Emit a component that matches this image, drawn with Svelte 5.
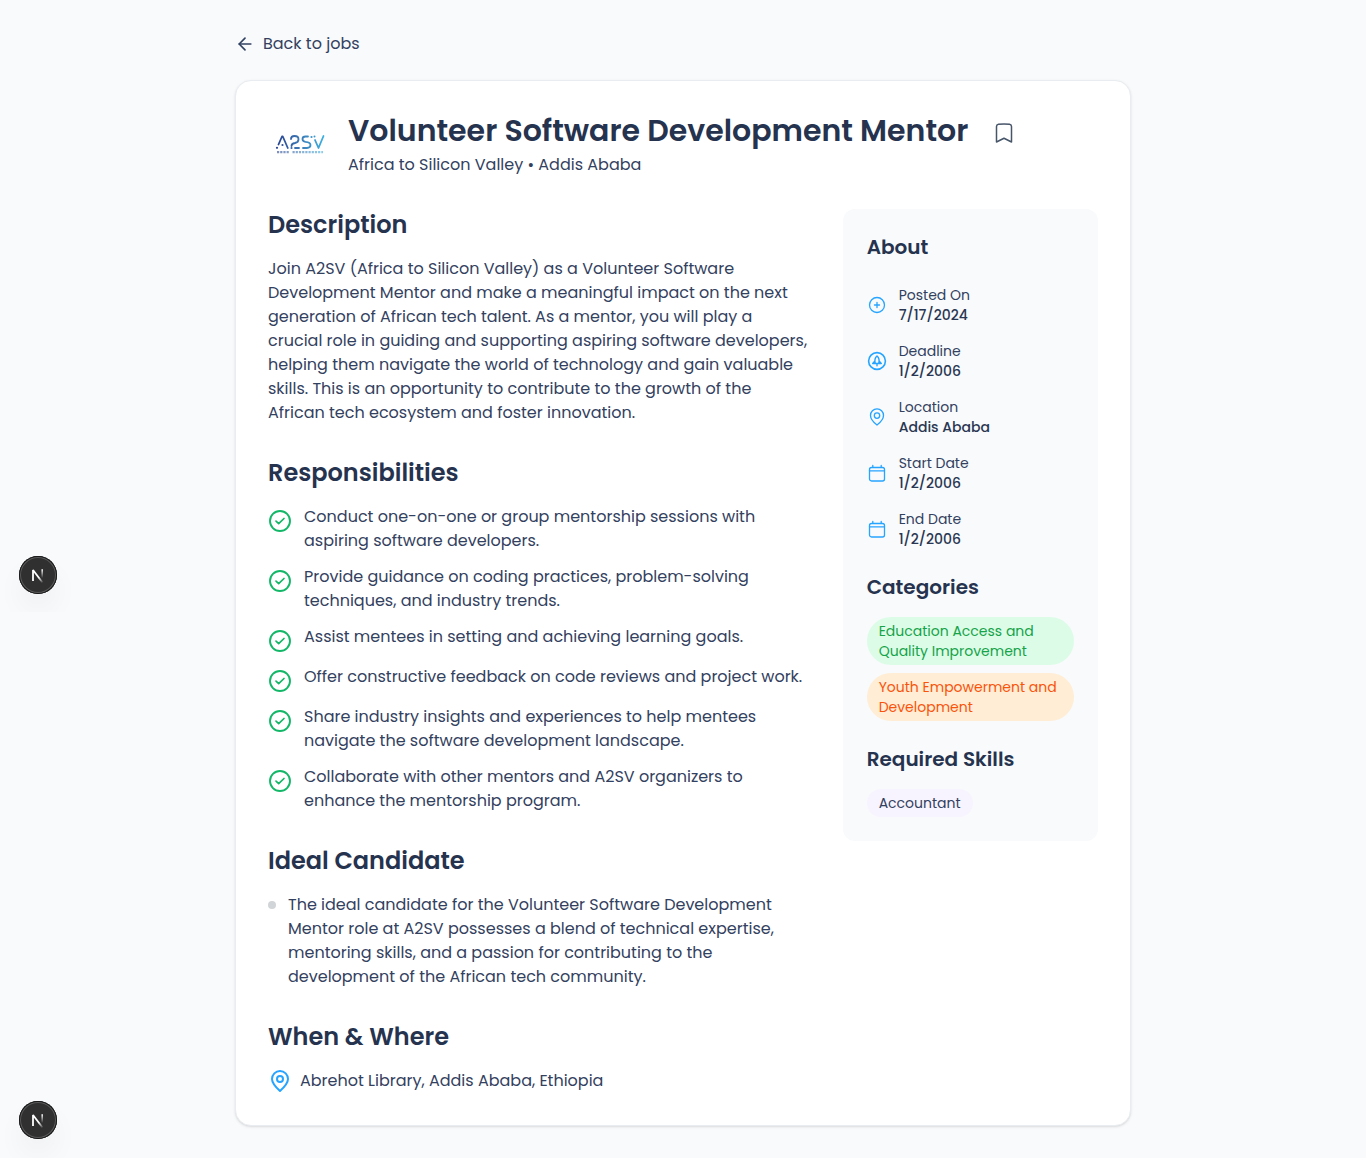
<script>
  const description =
    'Join A2SV (Africa to Silicon Valley) as a Volunteer Software Development Mentor and make a meaningful impact on the next generation of African tech talent. As a mentor, you will play a crucial role in guiding and supporting aspiring software developers, helping them navigate the world of technology and gain valuable skills. This is an opportunity to contribute to the growth of the African tech ecosystem and foster innovation.';

  const responsibilities = [
    'Conduct one-on-one or group mentorship sessions with aspiring software developers.',
    'Provide guidance on coding practices, problem-solving techniques, and industry trends.',
    'Assist mentees in setting and achieving learning goals.',
    'Offer constructive feedback on code reviews and project work.',
    'Share industry insights and experiences to help mentees navigate the software development landscape.',
    'Collaborate with other mentors and A2SV organizers to enhance the mentorship program.'
  ];

  const candidate =
    'The ideal candidate for the Volunteer Software Development Mentor role at A2SV possesses a blend of technical expertise, mentoring skills, and a passion for contributing to the development of the African tech community.';

  const facts = [
    { icon: 'plus', label: 'Posted On', value: '7/17/2024' },
    { icon: 'rocket', label: 'Deadline', value: '1/2/2006' },
    { icon: 'pin', label: 'Location', value: 'Addis Ababa' },
    { icon: 'calendar', label: 'Start Date', value: '1/2/2006' },
    { icon: 'calendar', label: 'End Date', value: '1/2/2006' }
  ];

  const categories = [
    { text: 'Education Access and Quality Improvement', tone: 'green' },
    { text: 'Youth Empowerment and Development', tone: 'orange' }
  ];
</script>

{#snippet nextMark(id)}
  <svg width="38" height="38" viewBox="0 0 38 38" fill="none" aria-hidden="true">
    <defs>
      <linearGradient id="{id}-a" x1="15" y1="14" x2="24" y2="26" gradientUnits="userSpaceOnUse">
        <stop offset="0.6" stop-color="#fff" />
        <stop offset="1" stop-color="#fff" stop-opacity="0.1" />
      </linearGradient>
      <linearGradient id="{id}-b" x1="0" y1="13" x2="0" y2="22" gradientUnits="userSpaceOnUse">
        <stop stop-color="#fff" />
        <stop offset="1" stop-color="#fff" stop-opacity="0" />
      </linearGradient>
    </defs>
    <path d="M14 25V14l9.500 12.500" stroke="url(#{id}-a)" stroke-width="1.8" stroke-linejoin="bevel" />
    <path d="M23.200 13.200v9" stroke="url(#{id}-b)" stroke-width="1.6" />
  </svg>
{/snippet}

<main class="page">
  <a class="back" href="#jobs">
    <svg width="20" height="20" viewBox="0 0 24 24" class="stroke" stroke-width="2" aria-hidden="true">
      <path d="m12 19-7-7 7-7" /><path d="M19 12H5" />
    </svg>
    Back to jobs
  </a>

  <article class="card">
    <header class="head">
      <svg class="logo" width="64" height="64" viewBox="0 0 64 64" fill="none" role="img" aria-label="A2SV">
        <defs>
          <linearGradient id="logo-ink" x1="8" y1="0" x2="56" y2="0" gradientUnits="userSpaceOnUse">
            <stop stop-color="#27418f" /><stop offset="0.5" stop-color="#3d79b5" /><stop offset="1" stop-color="#3bb0e0" />
          </linearGradient>
        </defs>
        <g stroke="url(#logo-ink)" stroke-width="1.8" stroke-linecap="round" stroke-linejoin="round">
          <path d="M10.500 31.500 14 23.500h.8l5 11.500" />
          <path d="M23 26q0-3 3.500-3 4 0 4 3.200t-3.500 3.800q-3.500.5-3.500 3" />
          <path d="M27 35h4" />
          <path d="M40 23.500h-2.500q-3 0-3 2.500t3 2.800q5 .3 5 3.200t-3.500 3h-4" />
          <path d="m47 27 3.500 8 5-12" />
        </g>
        <g fill="url(#logo-ink)">
          <circle cx="9" cy="34.800" r="1.100" /><circle cx="14.500" cy="32" r="1.100" />
          <circle cx="23.500" cy="35" r="1.100" />
          <circle cx="43.500" cy="24" r="1.100" /><circle cx="46.500" cy="23.500" r="1" />
        </g>
        <path d="M9 39.200h12.500M24.500 39.200h30.500" stroke="url(#logo-ink)" stroke-width="2.200" stroke-dasharray="2.200 1" opacity="0.600" />
      </svg>
      <div>
        <div class="title-row">
          <h1>Volunteer Software Development Mentor</h1>
          <button class="save" type="button" aria-label="Bookmark this job">
            <svg width="24" height="24" viewBox="0 0 24 24" class="stroke" stroke-width="1.5" aria-hidden="true">
              <path d="M17.593 3.322c1.100.128 1.907 1.077 1.907 2.185V21L12 17.250 4.500 21V5.507c0-1.108.806-2.057 1.907-2.185a48.507 48.507 0 0 1 11.186 0Z" />
            </svg>
          </button>
        </div>
        <p>Africa to Silicon Valley • Addis Ababa</p>
      </div>
    </header>

    <div class="columns">
      <div class="main">
        <section>
          <h2>Description</h2>
          <p>{description}</p>
        </section>

        <section>
          <h2>Responsibilities</h2>
          <ul class="checks">
            {#each responsibilities as item}
              <li>
                <svg width="24" height="24" viewBox="0 0 24 24" class="stroke green-ink" stroke-width="1.9" aria-hidden="true">
                  <circle cx="12" cy="12" r="10" /><path d="m8 12.200 2.700 2.500 5.300-5.200" stroke-width="1.700" />
                </svg>
                <span>{item}</span>
              </li>
            {/each}
          </ul>
        </section>

        <section>
          <h2>Ideal Candidate</h2>
          <ul class="dots">
            <li><span class="dot"></span><span>{candidate}</span></li>
          </ul>
        </section>

        <section>
          <h2>When &amp; Where</h2>
          <p class="place">
            <svg width="24" height="24" viewBox="0 0 24 24" class="stroke blue-ink" stroke-width="2" aria-hidden="true">
              <path d="M12 22C9 19.300 4 14.500 4 10a8 8 0 0 1 16 0c0 4.500-5 9.300-8 12Z" /><circle cx="12" cy="10" r="3" />
            </svg>
            Abrehot Library, Addis Ababa, Ethiopia
          </p>
        </section>
      </div>

      <aside>
        <section>
          <h3 class="about">About</h3>
          <dl>
            {#each facts as fact}
              <div class="fact">
                <svg width="20" height="20" viewBox="0 0 20 20" class="stroke blue-ink" stroke-width="1.3" aria-hidden="true">
                  {#if fact.icon === 'plus'}
                    <circle cx="10" cy="10" r="7.500" /><path d="M10 7.500v5M7.500 10h5" />
                  {:else if fact.icon === 'rocket'}
                    <circle cx="10" cy="10" r="8.400" stroke-width="1.600" />
                    <path d="M8.300 12.500C7.300 9 8.500 6.300 10 5c1.500 1.300 2.700 4 1.700 7.500ZM7.700 10.300 5.700 12.500h8.600l-2-2.200M10 12.500v2.300" stroke-width="1.400" />
                  {:else if fact.icon === 'pin'}
                    <path d="M10 18c-2.500-2-6.500-5.800-6.500-9.600a6.500 6.500 0 0 1 13 0C16.500 12.200 12.500 16 10 18Z" /><circle cx="10" cy="8.600" r="2.700" />
                  {:else}
                    <rect x="2.500" y="4.500" width="15" height="13.500" rx="2" /><path d="M2.500 7.800h15M5.800 2.500v1.800M14.200 2.500v1.800" />
                  {/if}
                </svg>
                <div>
                  <dt>{fact.label}</dt>
                  <dd>{fact.value}</dd>
                </div>
              </div>
            {/each}
          </dl>
        </section>

        <section>
          <h3>Categories</h3>
          <ul class="tags">
            {#each categories as tag}
              <li class="tag {tag.tone}">{tag.text}</li>
            {/each}
          </ul>
        </section>

        <section>
          <h3>Required Skills</h3>
          <ul class="tags">
            <li class="tag purple">Accountant</li>
          </ul>
        </section>
      </aside>
    </div>
  </article>
</main>

<div class="clip">
  <button class="dev" type="button" aria-label="Open developer tools">{@render nextMark('upper')}</button>
</div>
<div class="clip low">
  <button class="dev" type="button" aria-label="Open developer tools panel">{@render nextMark('lower')}</button>
</div>

<style>
  :global(body) {
    margin: 0;
    background: #f8fafc;
  }
  h1, h2, h3, p, ul, dl, dd {
    margin: 0;
    padding: 0;
  }
  ul {
    list-style: none;
  }
  .page {
    box-sizing: border-box;
    max-width: 896px;
    margin: 0 auto;
    padding: 32px 0;
    font: 400 16px/24px Poppins, Inter, sans-serif;
    color: #334160;
  }
  svg {
    flex: none;
    display: block;
  }
  .stroke {
    fill: none;
    stroke: currentColor;
    stroke-linecap: round;
    stroke-linejoin: round;
  }
  .blue-ink {
    color: #26a4ff;
  }
  .green-ink {
    color: #13b767;
    margin-top: 4px;
  }
  .back {
    display: flex;
    width: fit-content;
    align-items: center;
    gap: 8px;
    margin-bottom: 24px;
    color: inherit;
    text-decoration: none;
  }
  .card {
    padding: 32px;
    border: 1px solid #e9ecf0;
    border-radius: 16px;
    background: #fff;
    box-shadow: 0 1px 3px rgb(0 0 0 / 10%), 0 1px 2px -1px rgb(0 0 0 / 10%);
  }
  .head {
    display: flex;
    gap: 16px;
    margin-bottom: 32px;
  }
  .title-row {
    display: flex;
    gap: 16px;
  }
  h1, h2, h3 {
    font-weight: 600;
    color: #26334f;
  }
  h1 {
    font-size: 30px;
    line-height: 36px;
  }
  h2 {
    margin-bottom: 16px;
    font-size: 24px;
    line-height: 32px;
  }
  h3 {
    margin-bottom: 16px;
    font-size: 20px;
    line-height: 28px;
  }
  .about {
    margin-bottom: 24px;
  }
  .save {
    align-self: start;
    padding: 8px;
    border: 0;
    background: none;
    color: #475569;
    cursor: pointer;
  }
  .columns {
    display: grid;
    grid-template-columns: repeat(3, minmax(0, 1fr));
    align-items: start;
    gap: 32px;
  }
  .main {
    grid-column: span 2;
    display: grid;
    gap: 32px;
  }
  .checks {
    display: grid;
    gap: 12px;
  }
  .checks li, .dots li {
    display: flex;
    gap: 12px;
  }
  .dot {
    flex: none;
    width: 8px;
    height: 8px;
    margin-top: 8px;
    border-radius: 50%;
    background: #d1d5d8;
  }
  .place {
    display: flex;
    gap: 8px;
  }
  aside {
    display: grid;
    gap: 24px;
    padding: 24px;
    border-radius: 12px;
    background: #f8fafc;
    font-size: 14px;
    line-height: 20px;
  }
  dl {
    display: grid;
    gap: 16px;
  }
  .fact {
    display: flex;
    align-items: center;
    gap: 12px;
  }
  dd {
    font-weight: 500;
    color: #2a3752;
  }
  .tags {
    display: flex;
    flex-wrap: wrap;
    gap: 8px;
  }
  .tag {
    padding: 4px 12px;
    border-radius: 24px;
  }
  .green {
    background: #dcfce7;
    color: #16a34a;
  }
  .orange {
    background: #ffedd5;
    color: #f9540b;
  }
  .purple {
    background: #f8f4ff;
  }
  /* Floating developer badge, pinned to the left edge */
  .clip {
    position: absolute;
    left: 0;
    top: 512px;
    width: 110px;
    height: 100px;
    overflow: hidden;
  }
  .low {
    position: fixed;
    top: auto;
    bottom: 0;
  }
  .dev {
    position: absolute;
    left: 19px;
    bottom: 18px;
    width: 38px;
    height: 38px;
    padding: 0;
    border: 0;
    border-radius: 50%;
    background: #303030;
    box-shadow: inset 0 0 0 1px #171717, inset 0 0 0 2px #5a5a5a, 0 16px 32px -8px rgb(0 0 0 / 12%);
    cursor: pointer;
  }
  .low .dev {
    bottom: 19px;
  }
</style>
